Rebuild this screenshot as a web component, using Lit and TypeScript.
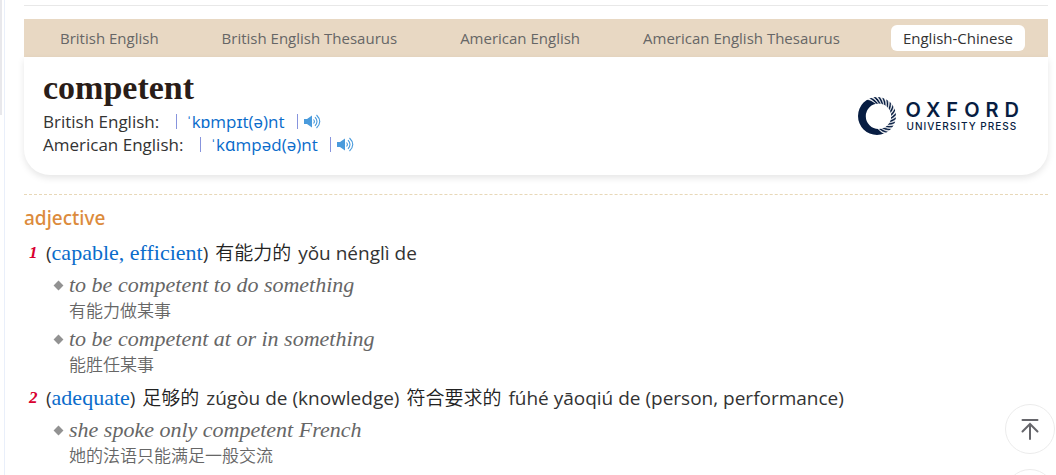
import { LitElement, html, svg, css } from "lit";
import { customElement } from "lit/decorators.js";

const TABS = [
  "British English",
  "British English Thesaurus",
  "American English",
  "American English Thesaurus",
  "English-Chinese",
];

const PRONUNCIATIONS = [
  { label: "British English:", ipa: "ˈkɒmpɪt(ə)nt" },
  { label: "American English:", ipa: "ˈkɑmpəd(ə)nt" },
];

const SENSES = [
  {
    hint: "capable, efficient",
    parts: [{ zh: "有能力的", rest: "yǒu nénglì de" }],
    examples: [
      { en: "to be competent to do something", zh: "有能力做某事" },
      { en: "to be competent at or in something", zh: "能胜任某事" },
    ],
  },
  {
    hint: "adequate",
    parts: [
      { zh: "足够的", rest: "zúgòu de (knowledge)" },
      { zh: "符合要求的", rest: "fúhé yāoqiú de (person, performance)" },
    ],
    examples: [{ en: "she spoke only competent French", zh: "她的法语只能满足一般交流" }],
  },
];

// Slits cut into the ring, swept clockwise from the top to the lower right.
const slits = Array.from({ length: 15 }, (_, i) => {
  const a = ((-122 + i * 13) * Math.PI) / 180;
  const p = (r: number, t: number) =>
    `${(19 + r * Math.cos(t)).toFixed(2)} ${(19 + r * Math.sin(t)).toFixed(2)}`;
  return `M${p(20, a)}Q${p(17.5, a + 0.2)} ${p(12.6, a + 0.46)}Q${p(16.5, a + 0.3)} ${p(20, a + 0.1)}Z`;
}).join("");

@customElement("oxford-logo")
export class OxfordLogo extends LitElement {
  static styles = css`
    :host { display: flex; align-items: center; gap: 10px; padding-top: 8px; color: #071d42; }
    .ring { display: block; width: 38px; height: 38px; }
    .words { display: flex; flex-direction: column; font-family: "Inter", sans-serif; }
    .name { font-size: 20px; line-height: 20px; font-weight: 600; letter-spacing: 6px; }
    .sub { font-size: 10px; line-height: 12px; font-weight: 500; letter-spacing: 1px; padding-left: 1px; }
  `;
  render() {
    return html`
      <svg class="ring" viewBox="0 0 38 38" aria-hidden="true">
        <path fill="#071d42" fill-rule="evenodd"
          d="M19 0a19 19 0 1 1 0 38a19 19 0 1 1 0-38zM20.500 6.500a12.700 12.700 0 1 0 0 25.400a12.700 12.700 0 1 0 0-25.400z" />
        ${svg`<path d=${slits} fill="#fff" stroke="#fff" stroke-width="0.5" />`}
      </svg>
      <div class="words">
        <span class="name">OXFORD</span>
        <span class="sub">UNIVERSITY PRESS</span>
      </div>
    `;
  }
}

@customElement("app-root")
export class AppRoot extends LitElement {
  static styles = css`
    :host {
      display: block;
      position: relative;
      height: 100vh;
      overflow: hidden;
      background: #fff;
      color: #333;
      font-family: "Open Sans", "Noto Sans CJK SC", sans-serif;
    }
    * { box-sizing: border-box; }
    .frame { display: flex; height: 100%; }
    .rail { width: 5px; flex: none; border-right: 1px solid #e9effa; }
    .thumb { width: 2px; height: 115px; background: #e8e8ec; }
    .page { flex: 1; min-width: 0; padding: 5px 8px 0 19px; }
    .rule { border: 0; border-top: 1px solid #e8e8e8; margin: 0 0 13px; }
    .tabs {
      display: flex; justify-content: space-between; align-items: center;
      height: 38px; padding: 0 23px 0 24px; background: #e8d8c3;
    }
    .tab {
      border: 0; border-radius: 6px; background: none; color: #666; cursor: pointer;
      font-family: inherit; font-size: 15px; line-height: 26px; padding: 0 12px;
    }
    .tab.on { background: #fff; color: #333; }
    .card {
      display: flex; justify-content: space-between; align-items: center;
      padding: 10px 23px 19px 19px; border-radius: 0 0 26px 26px;
      box-shadow: 0 3px 7px rgba(0, 0, 0, 0.1);
    }
    .word {
      margin: 0 0 1px; color: #2a1d18; font-family: "Liberation Serif", serif;
      font-size: 34px; line-height: 42px; font-weight: 700;
    }
    .pron { display: flex; align-items: center; font-size: 17px; line-height: 23px; }
    .label { margin-right: 17px; }
    .bar { width: 1px; height: 15px; background: #8794dd; }
    .ipa { padding: 0 12px 0 9px; color: #0a6ccb; }
    .say { display: flex; border: 0; padding: 0; margin-left: 6px; background: none; cursor: pointer; }
    .say svg { width: 17px; height: 15px; }
    .pos {
      margin: 19px 0 3px; padding-top: 10px; border-top: 1px dashed #e8d8b8;
      color: #dc8b3c; font-family: "Noto Sans", sans-serif;
      font-size: 19px; line-height: 26px; font-weight: 500;
    }
    .senses { margin: 0; padding: 0; list-style: none; }
    .sense { display: grid; grid-template-columns: 22px 1fr; padding-top: 5px; }
    .num {
      color: #d9002f; font: italic 700 17px/28px "Liberation Serif", serif;
      padding-left: 5px;
    }
    .def { font-size: 19px; line-height: 28px; }
    .cjk {
      margin: 0 2px; color: #222; font-family: "Noto Sans CJK SC", sans-serif;
      font-weight: 350; line-height: 20px;
    }
    .hint { color: #0a6ccb; text-decoration: none; font-family: "Liberation Serif", serif; font-size: 22px; line-height: 20px; }
    .examples { margin: 0; padding: 4px 0 0 8px; list-style: none; }
    .example { display: grid; grid-template-columns: 15px 1fr; padding-bottom: 4px; color: #666; }
    .dot { width: 7px; height: 7px; margin: 11px 0 0 1px; background: #929292; transform: rotate(45deg); }
    .en { font: italic 22px/28px "Liberation Serif", serif; }
    .zh { font-size: 17px; line-height: 22px; font-weight: 350; font-family: "Noto Sans CJK SC", sans-serif; grid-column: 2; }
    .float {
      position: absolute; right: 1px; top: 404px; display: flex; flex-direction: column; gap: 15px;
    }
    .round {
      display: grid; place-items: center; width: 50px; height: 50px; padding: 0;
      border: 1px solid #ececec; border-radius: 50%; background: #fff; cursor: pointer;
    }
    .round svg { width: 20px; height: 24px; }
  `;

  render() {
    return html`
      <div class="frame">
        <div class="rail"><div class="thumb"></div></div>
        <main class="page">
          <hr class="rule" />
          <nav class="tabs">
            ${TABS.map((t, i) => html`<button class="tab ${i === 4 ? "on" : ""}">${t}</button>`)}
          </nav>
          <header class="card">
            <div>
              <h1 class="word">competent</h1>
              ${PRONUNCIATIONS.map(
                (p) => html`<div class="pron">
                  <span class="label">${p.label}</span><span class="bar"></span>
                  <span class="ipa">${p.ipa}</span><span class="bar"></span>
                  <button class="say" aria-label="Play pronunciation">
                    <svg viewBox="0 0 17 15" fill="none" stroke="#4a9bdc" stroke-width="1.100">
                      <path d="M0 5h3L8 1.500v12L3 10H0z" fill="#4a9bdc" stroke="none" />
                      <path d="M9.500 5.500q1.800 2 0 4M11 3.200q4 4.300 0 8.600M12.500 1q6.500 6.500 0 13" />
                    </svg>
                  </button>
                </div>`
              )}
            </div>
            <oxford-logo></oxford-logo>
          </header>
          <h2 class="pos">adjective</h2>
          <ol class="senses">
            ${SENSES.map(
              (s, i) => html`<li class="sense">
                <span class="num">${i + 1}</span>
                <div>
                  <div class="def">(<a class="hint" href="#">${s.hint}</a>)${s.parts.map(
                    (p) => html` <span class="cjk">${p.zh}</span> ${p.rest}`
                  )}</div>
                  <ul class="examples">
                    ${s.examples.map(
                      (e) => html`<li class="example">
                        <span class="dot"></span><span class="en">${e.en}</span>
                        <span class="zh">${e.zh}</span>
                      </li>`
                    )}
                  </ul>
                </div>
              </li>`
            )}
          </ol>
        </main>
      </div>
      <div class="float">
        <button class="round" aria-label="Back to top">
          <svg viewBox="0 0 20 24" fill="none" stroke="#66666b" stroke-width="2" stroke-linecap="round">
            <path d="M2.500 3h15M10 7v15M2.500 14.500L10 7l7.500 7.500" />
          </svg>
        </button>
        <button class="round" aria-label="More"></button>
      </div>
    `;
  }
}
